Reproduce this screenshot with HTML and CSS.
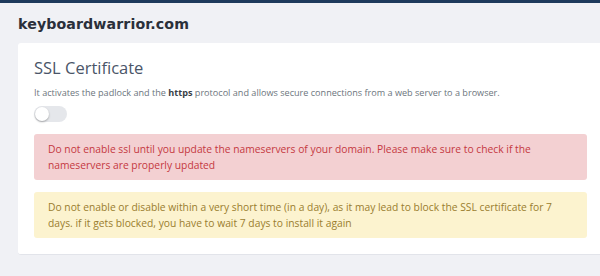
FILE: index.html
```html
<!DOCTYPE html>
<html lang="en">
<head>
  <meta charset="UTF-8">
  <title>SSL Certificate</title>
  <link rel="stylesheet" href="styles.css">
</head>
<body>
  <div class="topbar"></div>
  <div class="page">
    <h1 class="domain">keyboardwarrior.com</h1>
    <div class="card">
      <h2 class="card-title">SSL Certificate</h2>
      <p class="card-desc">It activates the padlock and the <b>https</b> protocol and allows secure connections from a web server to a browser.</p>
      <label class="switch">
        <span class="knob"></span>
      </label>
      <div class="alert alert-danger">
        Do not enable ssl until you update the nameservers of your domain. Please make sure to check if the nameservers are properly updated
      </div>
      <div class="alert alert-warning">
        Do not enable or disable within a very short time (in a day), as it may lead to block the SSL certificate for 7 days. if it gets blocked, you have to wait 7 days to install it again
      </div>
    </div>
  </div>
</body>
</html>
```

FILE: styles.css
```css
body {
  margin: 0;
  background: #f0f1f5;
  font-family: "Open Sans", "Noto Sans", sans-serif;
  overflow: hidden;
}
.topbar {
  height: 3px;
  background: #1e3a5c;
}
.page {
  width: 585px;
  padding: 0 0 0 18px;
}
.domain {
  margin: 10px 0 0 0;
  font-family: "DejaVu Sans", sans-serif;
  font-size: 14.2px;
  font-weight: 700;
  color: #2a2f3a;
  line-height: 22px;
  letter-spacing: 0.1px;
}
.card {
  margin-top: 8px;
  background: #fff;
  border-radius: 3px;
  border-bottom: 1px solid #e2e4ea;
  padding: 13px 16px 16px 16px;
}
.card-title {
  margin: 0;
  font-size: 16.5px;
  font-weight: 400;
  color: #4a5568;
  line-height: 24px;
}
.card-desc {
  margin: 6px 0 0 0;
  font-size: 9.1px;
  color: #6c757d;
  line-height: 14px;
}
.card-desc b {
  color: #3a3f47;
  font-weight: 700;
}
.switch {
  display: block;
  margin-top: 6px;
  width: 33px;
  height: 16px;
  border-radius: 8px;
  background: #e5e7eb;
  position: relative;
}
.knob {
  position: absolute;
  top: 1px;
  left: 1px;
  width: 14px;
  height: 14px;
  border-radius: 50%;
  background: #fff;
  box-shadow: 0 1px 2px rgba(0,0,0,0.3);
}
.alert {
  border-radius: 3px;
  padding: 7px 14px 7px 14px;
  font-size: 10.3px;
  line-height: 16px;
}
.alert-danger {
  margin-top: 12px;
  background: #f3d0d2;
  color: #c5383f;
}
.alert-warning {
  margin-top: 12px;
  background: #fcf3cf;
  color: #9a7d2e;
}
```
